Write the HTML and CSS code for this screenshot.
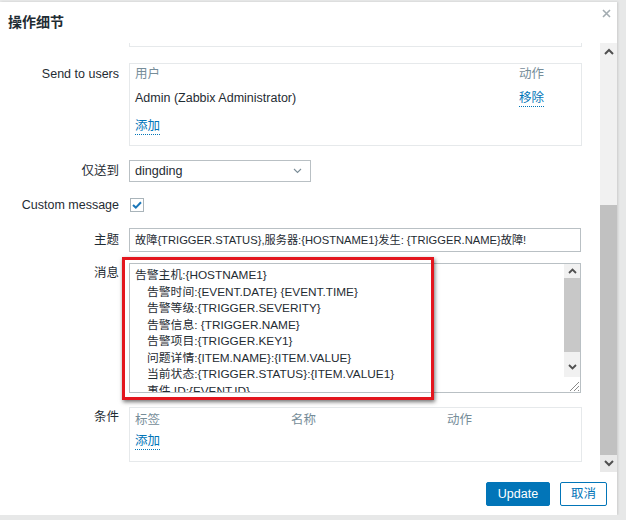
FILE: index.html
```html
<!DOCTYPE html>
<html lang="zh">
<head>
<meta charset="utf-8">
<title>操作细节</title>
<link rel="stylesheet" href="styles.css">
</head>
<body>
<div class="dialog">
  <div class="dlg-head">
    <h4 class="dlg-title">操作细节</h4>
    <span class="dlg-close"><svg width="9" height="9" viewBox="0 0 9 9"><path d="M1 1L8 8M8 1L1 8" stroke="#a3acb1" stroke-width="1.6" fill="none"/></svg></span>
  </div>
  <div class="dlg-body">
    <div class="dlg-content">
      <div class="form">
        <div class="row row-prev">
          <div class="row-label"></div>
          <div class="row-field"><div class="prev-box"></div></div>
        </div>
        <div class="row row-users">
          <div class="row-label label-box">Send to users</div>
          <div class="row-field">
            <div class="list-box users-box">
              <div class="list-line list-head">
                <span class="col-user">用户</span><span class="col-act">动作</span>
              </div>
              <div class="list-line list-item">
                <span class="col-user">Admin (Zabbix Administrator)</span><span class="col-act"><span class="link">移除</span></span>
              </div>
              <div class="list-line list-add"><span class="link">添加</span></div>
            </div>
          </div>
        </div>
        <div class="row row-ctl">
          <div class="row-label">仅送到</div>
          <div class="row-field">
            <div class="select">
              <span>dingding</span>
              <svg class="select-arrow" width="9" height="6" viewBox="0 0 9 6"><path d="M1 1L4.5 4.5L8 1" stroke="#7b8d97" stroke-width="1.1" fill="none"/></svg>
            </div>
          </div>
        </div>
        <div class="row row-ctl row-check">
          <div class="row-label">Custom message</div>
          <div class="row-field">
            <span class="checkbox"><svg width="10" height="8" viewBox="0 0 10 8"><path d="M1 4L3.8 6.6L9 1.2" stroke="#1b77b9" stroke-width="2" fill="none"/></svg></span>
          </div>
        </div>
        <div class="row row-ctl">
          <div class="row-label">主题</div>
          <div class="row-field">
            <div class="input">故障{TRIGGER.STATUS},服务器:{HOSTNAME1}发生: {TRIGGER.NAME}故障!</div>
          </div>
        </div>
        <div class="row row-message">
          <div class="row-label label-box">消息</div>
          <div class="row-field">
            <div class="textarea">
              <div class="ta-text">
                <div>告警主机:{HOSTNAME1}</div>
                <div class="ind">告警时间:{EVENT.DATE} {EVENT.TIME}</div>
                <div class="ind">告警等级:{TRIGGER.SEVERITY}</div>
                <div class="ind">告警信息: {TRIGGER.NAME}</div>
                <div class="ind">告警项目:{TRIGGER.KEY1}</div>
                <div class="ind">问题详情:{ITEM.NAME}:{ITEM.VALUE}</div>
                <div class="ind">当前状态:{TRIGGER.STATUS}:{ITEM.VALUE1}</div>
                <div class="ind">事件 ID:{EVENT.ID}</div>
              </div>
              <div class="ta-scroll">
                <div class="ta-up"><svg width="9" height="6" viewBox="0 0 9 6"><path d="M1 5L4.5 1.5L8 5" stroke="#505050" stroke-width="1.8" fill="none"/></svg></div>
                <div class="ta-thumb"></div>
                <div class="ta-down"><svg width="9" height="6" viewBox="0 0 9 6"><path d="M1 1L4.5 4.5L8 1" stroke="#505050" stroke-width="1.8" fill="none"/></svg></div>
                <div class="ta-grip"><svg width="12" height="12" viewBox="0 0 12 12"><path d="M11 2L2 11M11 6L6 11M11 10L10 11" stroke="#8a8a8a" stroke-width="1" fill="none"/></svg></div>
              </div>
            </div>
          </div>
        </div>
        <div class="row">
          <div class="row-label label-box">条件</div>
          <div class="row-field">
            <div class="list-box cond-box">
              <div class="list-line list-head">
                <span class="col-third">标签</span><span class="col-third">名称</span><span class="col-third">动作</span>
              </div>
              <div class="list-line cond-add"><span class="link">添加</span></div>
            </div>
          </div>
        </div>
      </div>
    </div>
    <div class="vscroll">
      <div class="sb-btn"><svg width="10" height="7" viewBox="0 0 10 7"><path d="M1 6L5 2L9 6" stroke="#505050" stroke-width="2" fill="none"/></svg></div>
      <div class="sb-track"></div>
      <div class="sb-thumb"></div>
      <div class="sb-btn sb-btn-down"><svg width="10" height="7" viewBox="0 0 10 7"><path d="M1 1L5 5L9 1" stroke="#505050" stroke-width="2" fill="none"/></svg></div>
    </div>
  </div>
  <div class="dlg-foot">
    <button class="btn btn-primary">Update</button>
    <button class="btn btn-alt">取消</button>
  </div>
  <div class="highlight"></div>
</div>
</body>
</html>
```
FILE: styles.css
```css
* { box-sizing: border-box; }
body {
  margin: 0;
  background: #e7e8e8;
  font: 12px/16px "Liberation Sans", Arial, "Noto Sans CJK SC", sans-serif;
  color: #1f2c33;
}
.dialog {
  position: relative;
  width: 617px;
  height: 513px;
  margin-top: 2px;
  background: #fff;
  display: flex;
  flex-direction: column;
  box-shadow: 1px 0 2px rgba(0,0,0,.12);
}
.dlg-head {
  height: 41px;
  display: flex;
  justify-content: space-between;
  align-items: flex-start;
  padding-left: 8px;
  flex: none;
}
.dlg-title {
  margin: 11px 0 0;
  font-size: 14px;
  line-height: 18px;
  font-weight: bold;
  color: #1f2c33;
}
.dlg-close {
  display: block;
  width: 9px;
  height: 9px;
  margin: 7px 6px 0 0;
}
.dlg-close svg { display: block; }
.dlg-body {
  height: 429px;
  display: flex;
  flex: none;
}
.dlg-content {
  width: 600px;
  overflow: hidden;
}
.form { display: flex; flex-direction: column; }
.row { display: flex; align-items: flex-start; }
.row + .row { margin-top: 14px; }
.row.row-users { margin-top: 16px; }
.row.row-message { margin-top: 11px; }
.row-ctl { align-items: center; }
.row-check { height: 18px; }
.row-label {
  width: 119px;
  flex: none;
  text-align: right;
  font-size: 12.5px;
  line-height: 16px;
  color: #1f2c33;
}
.label-box { padding-top: 3px; }
.row-message .label-box, .row:last-child .label-box { padding-top: 2px; }
.row-field {
  margin-left: 10px;
  width: 453px;
  flex: none;
}
.prev-box {
  height: 4px;
  border: 1px solid #e6e9eb;
  border-top: none;
}
.list-box {
  border: 1px solid #e6e9eb;
  padding: 2px 5px 0;
  font-size: 12.5px;
}
.users-box { height: 83px; }
.cond-box { height: 55px; padding-top: 4px; }
.list-line { display: flex; line-height: 16px; }
.list-head { color: #768d99; }
.list-item { margin-top: 8px; }
.list-add { margin-top: 12px; }
.cond-add { margin-top: 6px; }
.col-user { width: 384px; flex: none; }
.col-third { width: 156px; flex: none; }
.link {
  color: #0275b8;
  display: inline-block;
  line-height: 15px;
  border-bottom: 1px dotted #0275b8;
}
.select {
  width: 182px;
  height: 22px;
  border: 1px solid #b9c0c4;
  display: flex;
  align-items: center;
  justify-content: space-between;
  padding: 0 8px 0 5px;
  font-size: 12.6px;
}
.checkbox {
  width: 14px;
  height: 14px;
  border: 1px solid #a9b4ba;
  display: flex;
  align-items: center;
  justify-content: center;
  margin-left: 1px;
}
.checkbox svg { display: block; }
.input {
  width: 452px;
  height: 24px;
  border: 1px solid #b9c0c4;
  padding: 0 5px;
  font-size: 11.2px;
  line-height: 22px;
  white-space: nowrap;
  overflow: hidden;
}
.textarea {
  width: 452px;
  height: 130px;
  border: 1px solid #b9c0c4;
  display: flex;
}
.ta-text {
  flex: 1;
  overflow: hidden;
  padding: 3px 5px 0;
  font-size: 11.8px;
  line-height: 16.5px;
  white-space: nowrap;
}
.ind { padding-left: 12px; }
.ta-scroll {
  width: 16px;
  flex: none;
  display: flex;
  flex-direction: column;
}
.ta-up {
  height: 14px;
  background: #f1f1f1;
  display: flex;
  align-items: center;
  justify-content: center;
}
.ta-thumb { height: 74px; background: #c8c8c8; }
.ta-down {
  height: 25px;
  background: #f1f1f1;
  display: flex;
  align-items: flex-end;
  justify-content: center;
  padding-bottom: 7px;
}
.ta-grip {
  flex: 1;
  background: #fff;
  display: flex;
  align-items: flex-end;
  justify-content: flex-end;
}
.ta-up svg, .ta-down svg, .ta-grip svg, .sb-btn svg { display: block; }
.vscroll {
  width: 17px;
  flex: none;
  display: flex;
  flex-direction: column;
  background: #f1f1f1;
}
.sb-btn {
  height: 17px;
  display: flex;
  align-items: center;
  justify-content: center;
  flex: none;
}
.sb-btn-down { background: #e9e9e9; }
.sb-track { height: 145px; flex: none; }
.sb-thumb { height: 250px; flex: none; background: #c1c1c1; }
.dlg-foot {
  flex: 1;
  display: flex;
  justify-content: flex-end;
  align-items: flex-start;
  gap: 10px;
  padding: 10px 10px 0 0;
}
.btn {
  height: 24px;
  font: 12.5px/22px "Liberation Sans", Arial, "Noto Sans CJK SC", sans-serif;
  padding: 0;
  border: 1px solid #0275b8;
  border-radius: 2px;
}
.btn-primary { width: 64px; background: #0275b8; color: #fff; }
.btn-alt { width: 47px; background: #fff; color: #0275b8; }
.highlight {
  position: absolute;
  left: 122px;
  top: 255px;
  width: 312px;
  height: 143px;
  border: 3px solid #e3161e;
  box-shadow: 1px 2px 4px rgba(0,0,0,.55);
  pointer-events: none;
}
```
